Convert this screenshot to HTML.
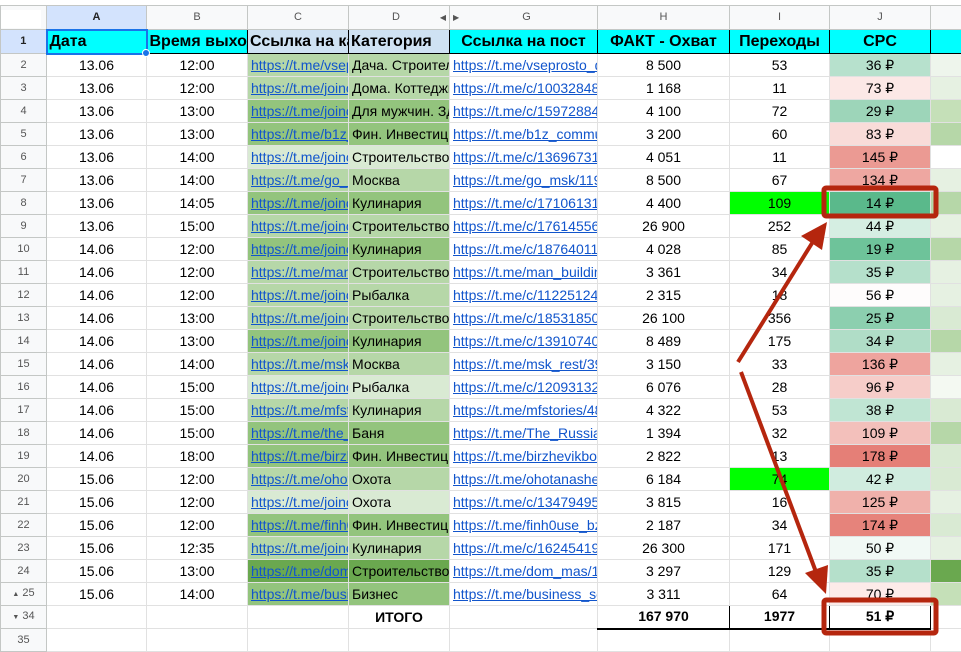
<!DOCTYPE html>
<html><head><meta charset="utf-8">
<style>
*{margin:0;padding:0;box-sizing:border-box}
body{width:961px;height:637px;overflow:hidden;background:#fff;font-family:"Liberation Sans",Arial,sans-serif;position:relative}
table{border-collapse:collapse;table-layout:fixed;position:absolute;left:0;top:5px;width:961px}
td{border:1px solid #e1e1e1;height:23px;font-size:14px;color:#000;white-space:nowrap;overflow:hidden;padding:0 3px;text-align:center;line-height:21px}
td.rh{background:#f8f9fa;color:#555;font-size:11px;text-align:center;border-color:#c4c7c5}
tr.ch td{height:24px;background:#f8f9fa;color:#555;font-size:11px;border-color:#c4c7c5}
tr.h td{height:24px;font-weight:bold;font-size:16px;background:#00ffff;text-align:left;border-bottom:1px solid #000;border-right:1px solid #000;padding:0 2px}
tr.h td.c{text-align:center}
td.l{text-align:left;color:#1155cc;text-decoration:underline;padding:0 3px}
td.t{text-align:left}
.g1{background:#d9ead3}.g2{background:#b6d7a8}.g3{background:#93c47d}.g4{background:#6aa84f}
</style></head><body>
<table>
<colgroup><col style="width:46px"><col style="width:100px"><col style="width:101px"><col style="width:101px"><col style="width:101px"><col style="width:148px"><col style="width:132px"><col style="width:100px"><col style="width:101px"><col style="width:31px"></colgroup>
<tr class="ch"><td style="background:#f8f9fa;padding:0"><div style="width:40px;height:18px;background:#fff;margin-top:2px"></div></td><td style="background:#d3e3fd;color:#222;font-weight:bold">A</td><td>B</td><td>C</td><td>D <span style="float:right;font-size:8px">◀</span></td><td><span style="float:left;font-size:8px">▶</span>G</td><td>H</td><td>I</td><td>J</td><td></td></tr>
<tr class="h"><td class="rh" style="background:#d3e3fd;color:#222;font-size:11px;font-weight:bold;text-align:center;border-color:#c4c7c5">1</td><td style="border:2px solid #1a73e8">Дата</td><td>Время выхода</td><td style="background:#cfe2f3">Ссылка на канал</td><td style="background:#cfe2f3">Категория</td><td class="c">Ссылка на пост</td><td class="c">ФАКТ - Охват</td><td class="c">Переходы</td><td class="c">CPC</td><td></td></tr>
<tr><td class="rh">2</td><td>13.06</td><td>12:00</td><td class="l g2">https://t.me/vseprosto</td><td class="t g2">Дача. Строительство</td><td class="l">https://t.me/vseprosto_dacha</td><td>8 500</td><td>53</td><td style="background:#b7e1cd">36 ₽</td><td style="background:#eef5ec"></td></tr>
<tr><td class="rh">3</td><td>13.06</td><td>12:00</td><td class="l g2">https://t.me/joinchat</td><td class="t g2">Дома. Коттеджи</td><td class="l">https://t.me/c/1003284831</td><td>1 168</td><td>11</td><td style="background:#fce8e6">73 ₽</td><td style="background:#e6f1e2"></td></tr>
<tr><td class="rh">4</td><td>13.06</td><td>13:00</td><td class="l g3">https://t.me/joinchat</td><td class="t g3">Для мужчин. Здоровье</td><td class="l">https://t.me/c/1597288461</td><td>4 100</td><td>72</td><td style="background:#9dd5b9">29 ₽</td><td style="background:#c5e0b8"></td></tr>
<tr><td class="rh">5</td><td>13.06</td><td>13:00</td><td class="l g3">https://t.me/b1z_</td><td class="t g3">Фин. Инвестиции</td><td class="l">https://t.me/b1z_community</td><td>3 200</td><td>60</td><td style="background:#f9dcd9">83 ₽</td><td style="background:#b6d7a8"></td></tr>
<tr><td class="rh">6</td><td>13.06</td><td>14:00</td><td class="l g1">https://t.me/joinchat</td><td class="t g1">Строительство</td><td class="l">https://t.me/c/1369673171</td><td>4 051</td><td>11</td><td style="background:#eb9a93">145 ₽</td><td></td></tr>
<tr><td class="rh">7</td><td>13.06</td><td>14:00</td><td class="l g2">https://t.me/go_msk</td><td class="t g2">Москва</td><td class="l">https://t.me/go_msk/1195</td><td>8 500</td><td>67</td><td style="background:#eea7a1">134 ₽</td><td style="background:#e6f1e2"></td></tr>
<tr><td class="rh">8</td><td>13.06</td><td>14:05</td><td class="l g3">https://t.me/joinchat</td><td class="t g3">Кулинария</td><td class="l">https://t.me/c/1710613111</td><td>4 400</td><td style="background:#00ff00">109</td><td style="background:#5ab98b">14 ₽</td><td style="background:#b6d7a8"></td></tr>
<tr><td class="rh">9</td><td>13.06</td><td>15:00</td><td class="l g2">https://t.me/joinchat</td><td class="t g2">Строительство</td><td class="l">https://t.me/c/1761455655</td><td>26 900</td><td>252</td><td style="background:#d5eee2">44 ₽</td><td style="background:#e6f1e2"></td></tr>
<tr><td class="rh">10</td><td>14.06</td><td>12:00</td><td class="l g3">https://t.me/joinchat</td><td class="t g3">Кулинария</td><td class="l">https://t.me/c/1876401161</td><td>4 028</td><td>85</td><td style="background:#6ec39a">19 ₽</td><td style="background:#b6d7a8"></td></tr>
<tr><td class="rh">11</td><td>14.06</td><td>12:00</td><td class="l g2">https://t.me/man_</td><td class="t g2">Строительство</td><td class="l">https://t.me/man_building</td><td>3 361</td><td>34</td><td style="background:#b5e0cb">35 ₽</td><td style="background:#e6f1e2"></td></tr>
<tr><td class="rh">12</td><td>14.06</td><td>12:00</td><td class="l g2">https://t.me/joinchat</td><td class="t g2">Рыбалка</td><td class="l">https://t.me/c/1122512421</td><td>2 315</td><td>18</td><td style="background:#fefcfc">56 ₽</td><td style="background:#e6f1e2"></td></tr>
<tr><td class="rh">13</td><td>14.06</td><td>13:00</td><td class="l g2">https://t.me/joinchat</td><td class="t g2">Строительство</td><td class="l">https://t.me/c/1853185051</td><td>26 100</td><td>356</td><td style="background:#8ccfaf">25 ₽</td><td style="background:#d9ead3"></td></tr>
<tr><td class="rh">14</td><td>14.06</td><td>13:00</td><td class="l g3">https://t.me/joinchat</td><td class="t g3">Кулинария</td><td class="l">https://t.me/c/1391074061</td><td>8 489</td><td>175</td><td style="background:#b0ddc7">34 ₽</td><td style="background:#b6d7a8"></td></tr>
<tr><td class="rh">15</td><td>14.06</td><td>14:00</td><td class="l g2">https://t.me/msk_</td><td class="t g2">Москва</td><td class="l">https://t.me/msk_rest/391</td><td>3 150</td><td>33</td><td style="background:#eea49e">136 ₽</td><td style="background:#e6f1e2"></td></tr>
<tr><td class="rh">16</td><td>14.06</td><td>15:00</td><td class="l g1">https://t.me/joinchat</td><td class="t g1">Рыбалка</td><td class="l">https://t.me/c/1209313201</td><td>6 076</td><td>28</td><td style="background:#f6cdc9">96 ₽</td><td style="background:#f4f9f2"></td></tr>
<tr><td class="rh">17</td><td>14.06</td><td>15:00</td><td class="l g2">https://t.me/mfstories</td><td class="t g2">Кулинария</td><td class="l">https://t.me/mfstories/481</td><td>4 322</td><td>53</td><td style="background:#c0e5d3">38 ₽</td><td style="background:#d9ead3"></td></tr>
<tr><td class="rh">18</td><td>14.06</td><td>15:00</td><td class="l g3">https://t.me/the_</td><td class="t g3">Баня</td><td class="l">https://t.me/The_Russian</td><td>1 394</td><td>32</td><td style="background:#f3c0bb">109 ₽</td><td style="background:#b6d7a8"></td></tr>
<tr><td class="rh">19</td><td>14.06</td><td>18:00</td><td class="l g3">https://t.me/birzh</td><td class="t g3">Фин. Инвестиции</td><td class="l">https://t.me/birzhevikbonus</td><td>2 822</td><td>13</td><td style="background:#e57f77">178 ₽</td><td style="background:#d9ead3"></td></tr>
<tr><td class="rh">20</td><td>15.06</td><td>12:00</td><td class="l g2">https://t.me/ohot</td><td class="t g2">Охота</td><td class="l">https://t.me/ohotanashevse</td><td>6 184</td><td style="background:#00ff00">74</td><td style="background:#d0ecdf">42 ₽</td><td style="background:#d9ead3"></td></tr>
<tr><td class="rh">21</td><td>15.06</td><td>12:00</td><td class="l g1">https://t.me/joinchat</td><td class="t g1">Охота</td><td class="l">https://t.me/c/1347949591</td><td>3 815</td><td>16</td><td style="background:#f0b1ab">125 ₽</td><td style="background:#e6f1e2"></td></tr>
<tr><td class="rh">22</td><td>15.06</td><td>12:00</td><td class="l g3">https://t.me/finh0</td><td class="t g3">Фин. Инвестиции</td><td class="l">https://t.me/finh0use_bzn</td><td>2 187</td><td>34</td><td style="background:#e6837b">174 ₽</td><td style="background:#d9ead3"></td></tr>
<tr><td class="rh">23</td><td>15.06</td><td>12:35</td><td class="l g2">https://t.me/joinchat</td><td class="t g2">Кулинария</td><td class="l">https://t.me/c/1624541941</td><td>26 300</td><td>171</td><td style="background:#f1f9f5">50 ₽</td><td style="background:#e6f1e2"></td></tr>
<tr><td class="rh">24</td><td>15.06</td><td>13:00</td><td class="l g4">https://t.me/dom_</td><td class="t g4">Строительство</td><td class="l">https://t.me/dom_mas/13</td><td>3 297</td><td>129</td><td style="background:#b5e0cb">35 ₽</td><td style="background:#6aa84f"></td></tr>
<tr><td class="rh"><span style="font-size:7px">▲</span> 25</td><td>15.06</td><td>14:00</td><td class="l g3">https://t.me/business</td><td class="t g3">Бизнес</td><td class="l">https://t.me/business_sc</td><td>3 311</td><td>64</td><td style="background:#fdebe9">70 ₽</td><td style="background:#c5e0b8"></td></tr>
<tr><td class="rh"><span style="font-size:7px">▼</span> 34</td><td></td><td></td><td></td><td style="font-weight:bold">ИТОГО</td><td></td><td style="font-weight:bold;border:1px solid #000;border-bottom:2px solid #000">167 970</td><td style="font-weight:bold;border:1px solid #000;border-bottom:2px solid #000">1977</td><td style="font-weight:bold;border:1px solid #000;border-bottom:2px solid #000">51 ₽</td><td></td></tr>
<tr><td class="rh">35</td><td></td><td></td><td></td><td></td><td></td><td></td><td></td><td></td><td></td></tr>
</table>
<div style="position:absolute;left:142px;top:49px;width:8px;height:8px;border-radius:50%;background:#1a73e8;border:1px solid #fff"></div>
<svg width="961" height="637" style="position:absolute;left:0;top:0" xmlns="http://www.w3.org/2000/svg">
<rect x="824" y="188" width="112" height="28" fill="none" stroke="#b5260e" stroke-width="5" rx="2"/>
<rect x="824" y="600" width="112" height="33" fill="none" stroke="#b5260e" stroke-width="5" rx="2"/>
<line x1="738" y1="362" x2="814" y2="240" stroke="#b5260e" stroke-width="4"/>
<polygon points="827,222 822,250 801,236" fill="#b5260e"/>
<line x1="741" y1="372" x2="816" y2="572" stroke="#b5260e" stroke-width="4"/>
<polygon points="826,594 805,573 828,565" fill="#b5260e"/>
</svg>
</body></html>
